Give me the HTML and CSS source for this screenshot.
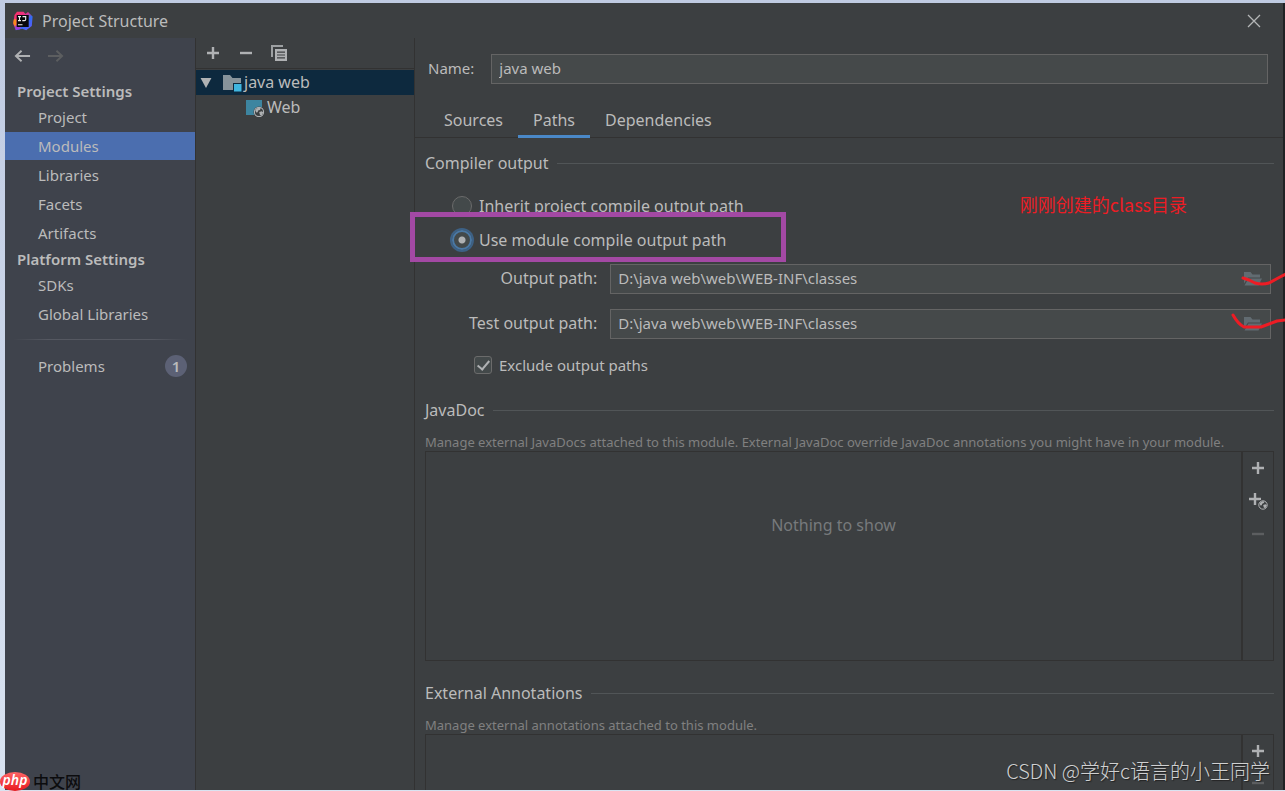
FILE: index.html
```
<!DOCTYPE html>
<html lang="en">
<head>
<meta charset="utf-8">
<title>Project Structure</title>
<link rel="stylesheet" href="styles.css">
</head>
<body>
<svg class="defs" aria-hidden="true">
  <defs>
    <symbol id="plus" viewBox="0 0 16 16"><path d="M8 2v12M2 8h12" stroke="currentColor" stroke-width="2.4" fill="none"/></symbol>
    <symbol id="minus" viewBox="0 0 16 16"><path d="M2 8h12" stroke="currentColor" stroke-width="2.4" fill="none"/></symbol>
    <symbol id="globe" viewBox="0 0 10 10"><circle cx="5" cy="5" r="4.2" fill="#3c3f41" stroke="#afb1b3" stroke-width="1"/><path d="M1.5 3.2 4 1.2l2.6.3-.8 1.6-1.6.6-.4 1.5L2.400 5.500zM5.200 5l2.400-.7 1.300 1.200L7.200 8.300 5.800 7.500z" fill="#afb1b3"/></symbol>
    <symbol id="open-folder" viewBox="0 0 20 16"><path d="M1 1h6.500l2 2.500H17v3H5L1 12.500z" fill="#616b71"/><path d="M5.500 7.500H19L15.500 14.500H1.500z" fill="#616b71"/></symbol>
  </defs>
</svg>
<div class="dialog">
  <header class="titlebar">
    <svg class="logo" viewBox="0 0 20 20" aria-hidden="true">
      <defs><linearGradient id="lg" x1="0" y1="0" x2="1" y2="1"><stop offset="0" stop-color="#fe315d"/><stop offset=".4" stop-color="#e8308c"/><stop offset=".6" stop-color="#2f6df2"/><stop offset="1" stop-color="#6b57ff"/></linearGradient></defs>
      <path d="M1.500 4 4 .8h6.500L12.500 3 15 1l4.600 4.500-.8 9.500-5.600 4.300-4-1.500-6.400 1.400L.3 13z" fill="url(#lg)"/>
      <path d="M.8 8.500 3.500 8v6L2 15.500.2 12z" fill="#f98b1d"/>
      <path d="M2.500 14.500 8 16l-1 2.200-4.200.8z" fill="#9b3be0"/>
      <path d="M3.700 4h12v12h-12z" fill="#08080a"/>
      <path d="M5 5.600h3M6.500 5.600v4M5 9.600h3M9.500 5.600h3.200v2.800q0 1.200-1.300 1.200H9.300M5 13.800h4.500" fill="none" stroke="#eee" stroke-width="1.100"/>
    </svg>
    <h1 class="title">Project Structure</h1>
    <button class="icon-btn close" aria-label="Close"><svg viewBox="0 0 14 14"><path d="M1 1l12 12M13 1 1 13" stroke="#b4b6b7" stroke-width="1.300"/></svg></button>
  </header>
  <div class="columns">
    <nav class="sidebar">
      <div class="history">
        <button class="icon-btn back" aria-label="Back"><svg viewBox="0 0 18 14"><path d="M8 1.500 2 7l6 5.500M2 7h15" fill="none" stroke="currentColor" stroke-width="2"/></svg></button>
        <button class="icon-btn forward" aria-label="Forward" disabled><svg viewBox="0 0 18 14"><path d="M10 1.500 16 7l-6 5.500M16 7H1" fill="none" stroke="currentColor" stroke-width="2"/></svg></button>
      </div>
      <h2 class="nav-heading">Project Settings</h2>
      <a class="nav-item" href="#">Project</a>
      <a class="nav-item selected" href="#" aria-current="page">Modules</a>
      <a class="nav-item" href="#">Libraries</a>
      <a class="nav-item" href="#">Facets</a>
      <a class="nav-item" href="#">Artifacts</a>
      <h2 class="nav-heading">Platform Settings</h2>
      <a class="nav-item" href="#">SDKs</a>
      <a class="nav-item" href="#">Global Libraries</a>
      <div class="nav-divider"></div>
      <a class="nav-item" href="#">Problems <span class="count">1</span></a>
    </nav>
    <section class="tree-pane">
      <div class="tree-tools">
        <button class="icon-btn" aria-label="Add"><svg viewBox="0 0 16 16"><use href="#plus"/></svg></button>
        <button class="icon-btn" aria-label="Remove"><svg viewBox="0 0 16 16"><use href="#minus"/></svg></button>
        <button class="icon-btn" aria-label="Copy"><svg viewBox="0 0 16 16"><path d="M0 0h12v2H2v10H0z" fill="#9da0a2"/><path fill-rule="evenodd" d="M4 4h12v12H4zM6 6.500v1.200h8V6.500zM6 9.400v1.200h8V9.400zM6 12.300v1.200h8v-1.200z" fill="#afb1b3"/></svg></button>
      </div>
      <div class="tree-row active">
        <svg class="arrow" viewBox="0 0 12 11"><path d="M0 0h12L6 11z" fill="#b0b2b3"/></svg>
        <svg class="node" viewBox="0 0 20 18"><path d="M1 1h7l2.500 3H19v12H1z" fill="#87939a"/><path d="M11 9h9v9h-9z" fill="#0d293e"/><path d="M12 10h7.500v7.500H12z" fill="#40b6e0"/></svg>
        <span>java web</span>
      </div>
      <div class="tree-row child">
        <svg class="node" viewBox="0 0 20 18"><path d="M1 1h16v15H1z" fill="#3d85a0"/><circle cx="14" cy="13" r="5.500" fill="#3c3f41"/><use href="#globe" x="8.500" y="7.500" width="11" height="11"/></svg>
        <span>Web</span>
      </div>
    </section>
    <main class="editor">
      <div class="name-row">
        <label for="name">Name:</label>
        <input class="field" id="name" type="text" value="java web">
      </div>
      <div class="tabs" role="tablist">
        <button class="tab" role="tab">Sources</button>
        <button class="tab current" role="tab" aria-selected="true">Paths</button>
        <button class="tab" role="tab">Dependencies</button>
      </div>
      <div class="body">
        <h3 class="group">Compiler output</h3>
        <div class="output">
          <div class="choice-row">
            <label class="choice"><input class="radio" type="radio" name="out">Inherit project compile output path</label>
            <p class="note">刚刚创建的class目录</p>
          </div>
          <div class="choice-row marked">
            <label class="choice"><input class="radio" type="radio" name="out" checked>Use module compile output path</label>
          </div>
          <div class="paths">
            <label for="out-path">Output path:</label>
            <div class="path-field">
              <input class="field" id="out-path" type="text" value="D:\java web\web\WEB-INF\classes">
              <button class="icon-btn browse" aria-label="Browse"><svg viewBox="0 0 20 16"><use href="#open-folder"/></svg></button>
              <svg class="stroke" viewBox="0 0 60 30" aria-hidden="true"><path d="M17 14 23 16 29 19Q36 21 43 19L54 13 60 10" /></svg>
            </div>
            <label for="test-path">Test output path:</label>
            <div class="path-field">
              <input class="field" id="test-path" type="text" value="D:\java web\web\WEB-INF\classes">
              <button class="icon-btn browse" aria-label="Browse"><svg viewBox="0 0 20 16"><use href="#open-folder"/></svg></button>
              <svg class="stroke" viewBox="0 0 60 30" aria-hidden="true"><path d="M7 6Q12 15 18 18H35L51 12 60 11"/></svg>
            </div>
          </div>
          <label class="choice exclude"><input class="check" type="checkbox" checked>Exclude output paths</label>
        </div>
        <h3 class="group">JavaDoc</h3>
        <p class="hint">Manage external JavaDocs attached to this module. External JavaDoc override JavaDoc annotations you might have in your module.</p>
        <div class="list">
          <div class="list-area">Nothing to show</div>
          <div class="list-tools">
            <button class="icon-btn" aria-label="Add"><svg viewBox="0 0 16 16"><use href="#plus"/></svg></button>
            <button class="icon-btn wide" aria-label="Add URL"><svg viewBox="0 0 20 18"><path d="M7 1v12M1 7h12" stroke="currentColor" stroke-width="2.400"/><circle cx="15" cy="13" r="5.500" fill="#3c3f41"/><use href="#globe" x="10" y="8" width="10" height="10"/></svg></button>
            <button class="icon-btn" aria-label="Remove" disabled><svg viewBox="0 0 16 16"><use href="#minus"/></svg></button>
          </div>
        </div>
        <h3 class="group">External Annotations</h3>
        <p class="hint">Manage external annotations attached to this module.</p>
        <div class="list last">
          <div class="list-area"></div>
          <div class="list-tools">
            <button class="icon-btn" aria-label="Add"><svg viewBox="0 0 16 16"><use href="#plus"/></svg></button>
            <button class="icon-btn" aria-label="Remove" disabled><svg viewBox="0 0 16 16"><use href="#minus"/></svg></button>
          </div>
        </div>
      </div>
    </main>
  </div>
</div>
<div class="site-mark"><span class="php">php</span><span class="site-name">中文网</span></div>
<div class="credit">CSDN @学好c语言的小王同学</div>
</body>
</html>
```
FILE: styles.css
```
*, *::before, *::after { box-sizing: border-box; }
html, body { height: 100%; }
body {
  margin: 0;
  padding: 3px 2px 1px 5px;
  overflow: hidden;
  position: relative;
  background: linear-gradient(#c0cbe2, #d9e3f1);
  color: #bbbbbb;
  font: 16px/20px "Noto Sans", "Noto Sans CJK SC", sans-serif;
}
h1, h2, h3, p { margin: 0; font-size: inherit; font-weight: normal; }
button, input { font: inherit; color: inherit; }
.defs { position: absolute; width: 0; height: 0; }
.dialog {
  height: 100%;
  display: flex;
  flex-direction: column;
  background: #3c3f41;
  box-shadow: 2px 0 0 #202224;
}
.icon-btn {
  display: flex;
  flex: none;
  width: 16px;
  height: 16px;
  padding: 0;
  border: 0;
  background: none;
  color: #afb1b3;
}
.icon-btn svg { width: 100%; height: 100%; }
.icon-btn:disabled { color: #5c5e60; }

.titlebar { flex: none; height: 35px; display: flex; align-items: center; gap: 9px; padding: 0 22px 0 8px; }
.logo { width: 20px; height: 20px; }
.title { flex: 1; }
.close { width: 14px; height: 14px; }

.columns { flex: 1; min-height: 0; display: flex; }
.sidebar { flex: none; width: 191px; display: flex; flex-direction: column; gap: 1px; background: #3f434c; border-right: 1px solid #323232; font-size: 15px; }
.history { display: flex; gap: 16px; height: 36px; align-items: center; padding-left: 9px; margin-bottom: 5px; }
.history .icon-btn { width: 17px; height: 14px; }
.nav-heading { height: 22px; line-height: 22px; padding-left: 12px; font-weight: 600; }
.nav-item { height: 28px; line-height: 28px; padding: 0 8px 0 33px; display: flex; align-items: center; justify-content: space-between; color: inherit; text-decoration: none; }
.selected { background: #4b6eaf; }
.nav-divider { height: 1px; margin: 10px 8px 11px; background: linear-gradient(90deg, transparent, #555861 20%, #555861 80%, transparent); }
.count { width: 22px; height: 22px; border-radius: 50%; background: #5c6175; line-height: 22px; text-align: center; font-weight: 600; }

.tree-pane { flex: none; width: 219px; border-right: 1px solid #323232; }
.tree-tools { display: flex; align-items: center; gap: 17px; height: 31px; padding: 0 9px 1px; border-bottom: 1px solid #323232; margin-bottom: 1px; }
.tree-row { display: flex; align-items: center; height: 25px; padding-left: 4px; gap: 2px; }
.tree-row span { padding-bottom: 2px; }
.active { background: #0d293e; }
.arrow { width: 12px; height: 10px; margin-right: 8px; }
.node { width: 20px; height: 18px; }
.child { padding-left: 49px; }

.editor { flex: 1; min-width: 0; display: flex; flex-direction: column; }
.name-row { display: flex; align-items: center; gap: 17px; padding: 16px 15px 0 13px; font-size: 15px; }
.name-row label { padding-bottom: 2px; }
.field { flex: 1; min-width: 0; height: 30px; padding: 0 7px 2px; border: 1px solid #646464; border-radius: 0; background: #45494a; outline: 0; font-size: 15px; }
.tabs { flex: none; display: flex; height: 54px; padding: 19px 14px 0; border-bottom: 1px solid #323232; }
.tab { height: 35px; padding: 2px 15px 0; border: 0; border-bottom: 3px solid transparent; background: none; }
.current { border-color: #4a88c7; }

.body { flex: 1; min-height: 0; display: flex; flex-direction: column; padding: 14px 9px 0 10px; }
.group { display: flex; align-items: center; gap: 8px; height: 22px; flex: none; }
.group::after { content: ""; flex: 1; height: 1px; background: #515557; }
.output { display: flex; flex-direction: column; padding: 15px 3px 23px 25px; }
.choice { display: flex; align-items: center; gap: 5px; }
.choice-row { display: flex; align-items: center; justify-content: space-between; height: 34px; }
.note { padding: 0 84px 5px 0; color: #ed1c24; font-size: 18px; font-family: "Noto Sans CJK SC", sans-serif; }
.radio, .check { appearance: none; flex: none; margin: 0; }
.radio { width: 20px; height: 20px; margin: 0 2px; border: 1px solid #6b6b6b; border-radius: 50%; background: #43494a; }
.radio:checked { border: 2px solid #4a78a4; box-shadow: 0 0 0 2px #3d6185; background: radial-gradient(circle, #afb1b3 3px, #43494a 4px); }
.marked { position: relative; }
.marked::after { content: ""; position: absolute; left: -40px; top: -11px; width: 376px; height: 50px; border: 5px solid #a349a4; pointer-events: none; }
.paths { display: grid; grid-template-columns: auto 1fr; gap: 15px 13px; align-items: center; padding: 7px 0 0 19px; }
.paths label { padding-bottom: 2px; text-align: right; }
.path-field { position: relative; display: flex; }
.browse { position: absolute; right: 8px; top: 7px; width: 20px; height: 16px; }
.stroke { position: absolute; left: calc(100% - 45px); top: 0; width: 60px; height: 30px; fill: none; stroke: #ed1c24; stroke-width: 3; stroke-linecap: round; stroke-linejoin: round; }
.exclude { height: 22px; margin-top: 15px; padding-left: 24px; gap: 7px; font-size: 15px; }
.check { width: 18px; height: 18px; border: 1px solid #6b6b6b; border-radius: 3px; background: #43494a; }
.check:checked::before { content: ""; display: block; width: 7px; height: 12px; margin: 1px 0 0 5px; border: solid #afb1b3; border-width: 0 2px 2px 0; transform: rotate(40deg); }
.hint { flex: none; margin-top: 12px; font-size: 13px; line-height: 18px; color: #808080; white-space: nowrap; }
.list { flex: none; display: flex; height: 210px; margin-bottom: 21px; border: 1px solid #323232; }
.list-area { flex: 1; padding-top: 63px; text-align: center; color: #777a7c; }
.list-tools { width: 32px; display: flex; flex-direction: column; align-items: center; gap: 16px; padding-top: 8px; border-left: 2px solid #323232; }
.wide { width: 20px; height: 18px; }
.last { flex: 1; min-height: 0; margin: 0; border-bottom: 0; overflow: hidden; }

.site-mark { position: absolute; left: 0; bottom: 0; display: flex; align-items: center; gap: 3px; height: 20px; }
.php { width: 30px; height: 19px; border-radius: 50%; background: linear-gradient(#f66, #e8191f); color: #fff; font-size: 14px; font-style: italic; line-height: 16px; text-align: center; font-weight: 600; }
.site-name { color: #0c0c0e; font-size: 16px; font-family: "Noto Sans CJK SC", sans-serif; font-weight: 500; }
.credit { position: absolute; right: 15px; bottom: 7px; color: #d0d1d2; font: 300 20px/26px "Noto Sans CJK SC", sans-serif; text-shadow: 1px 1px 1px #222; }
```
